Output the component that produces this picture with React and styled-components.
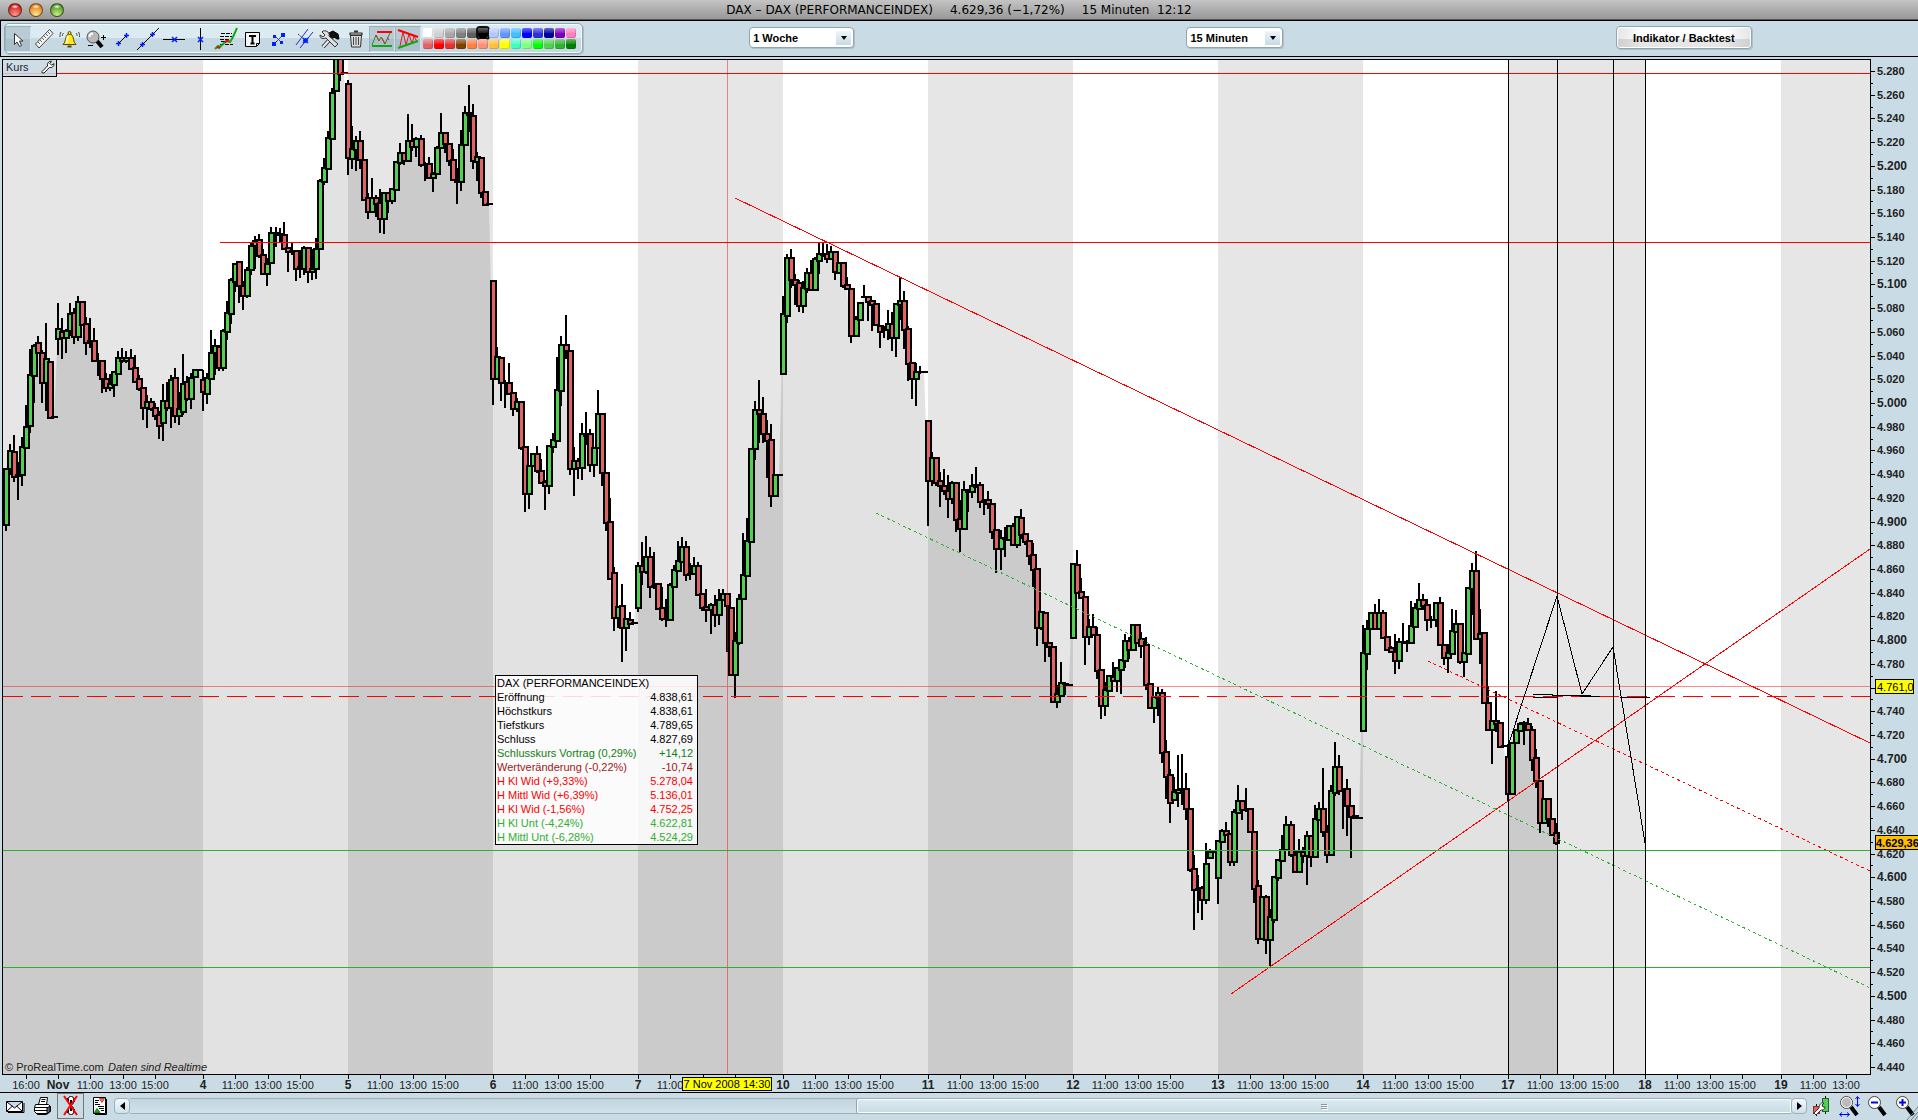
import React, { Component } from 'react';
import styled, { createGlobalStyle, css } from 'styled-components';

const GlobalStyle = createGlobalStyle`
  * {
    box-sizing: border-box;
  }

  body {
    margin: 0;
    background: #c9dbe4;
    font-family: 'Liberation Sans', Arial, sans-serif;
    font-size: 11px;
    color: #000;
  }
`;

const Window = styled.div`
  display: flex;
  flex-direction: column;
  overflow: hidden;
`;

const TitleBar = styled.header`
  display: flex;
  align-items: center;
  height: 21px;
  padding: 0 8px;
  background: linear-gradient(#c4c4c4, #969696);
  border-bottom: 1px solid #000;
  box-shadow: inset 0 -1px 0 #555;
`;

const Lights = styled.div`
  display: flex;
  flex: 1;
  gap: 7px;
`;

const Light = styled.button`
  width: 14px;
  height: 14px;
  padding: 0;
  border: 1px solid rgba(40, 20, 10, 0.6);
  border-radius: 50%;
  background: radial-gradient(ellipse 4px 2px at 50% 22%, rgba(255, 255, 255, 0.95), rgba(255, 255, 255, 0) 100%),
    radial-gradient(circle at 50% 90%, ${({ $glow }) => $glow}, ${({ $color }) => $color} 75%);
`;

const Title = styled.h1`
  display: flex;
  gap: 17px;
  margin: 0;
  font: 12px/18px 'DejaVu Sans', 'Open Sans', sans-serif;
  white-space: pre;
`;

const Toolbar = styled.div`
  display: flex;
  align-items: center;
  height: 36px;
  padding-left: 3px;
  border-left: 1px solid #000;
  border-bottom: 1px solid #000;
`;

const Tools = styled.div`
  display: flex;
  align-items: center;
  height: 31px;
  padding-right: 6px;
  border: 1px solid #8fa5b0;
  border-radius: 5px;
  background: linear-gradient(#dcebf2 50%, #c6d8e2 50%);
  box-shadow: inset 0 0 0 1px #f4fafc, 1px 1px 0 #aebfc8;
`;

const ToolButton = styled.button`
  display: flex;
  align-items: center;
  justify-content: center;
  width: 26px;
  height: 26px;
  padding: 0;
  border: none;
  background: none;

  ${({ $active }) =>
    $active &&
    css`
      background: linear-gradient(#b9cbd5 50%, #abc0cb 50%);
      box-shadow: inset 1px 1px 0 #9db1bc, inset -1px -1px 0 #d3e2ea;
    `}
`;

const Swatches = styled.div`
  display: grid;
  grid-template-columns: repeat(14, 10px);
  gap: 1px;
  padding-left: 2px;
`;

const Swatch = styled.button`
  height: 10px;
  padding: 0;
  border: none;
  border-radius: 2px;
  background: linear-gradient(rgba(255, 255, 255, 0.4), rgba(255, 255, 255, 0.1) 50%, rgba(255, 255, 255, 0) 50%)
    ${({ $color }) => $color};
  box-shadow: inset -1px -1px 0 rgba(0, 0, 0, 0.15);
  outline: ${({ $picked }) => ($picked ? '2px solid #111' : 'none')};
`;

const Controls = styled.div`
  display: flex;
  flex: 1;
  align-items: center;
  justify-content: space-around;
  padding-bottom: 2px;
`;

const SelectBox = styled.div`
  position: relative;
  width: ${({ $width }) => $width}px;
`;

const Select = styled.select`
  display: block;
  width: 100%;
  height: 21px;
  padding: 0 20px 0 3px;
  appearance: none;
  border: 1px solid #8fa5b0;
  border-radius: 4px;
  background: #fff;
  box-shadow: 1px 1px 0 #aebfc8;
  color: #000;
  font: bold 11px 'Liberation Sans', Arial, sans-serif;
`;

const Caret = styled.span`
  position: absolute;
  top: 4px;
  right: 3px;
  display: flex;
  align-items: center;
  justify-content: center;
  width: 15px;
  height: 14px;
  background: linear-gradient(#eef6fa, #c6dae5);
  pointer-events: none;

  &::after {
    content: '';
    border: 3px solid transparent;
    border-top: 4px solid #000;
    border-bottom: 0;
  }
`;

const BacktestButton = styled.button`
  width: 136px;
  height: 23px;
  padding: 0;
  border: 1px solid #8fa5b0;
  border-radius: 4px;
  background: linear-gradient(90deg, rgba(0, 0, 0, 0.1), transparent 20%, transparent 80%, rgba(0, 0, 0, 0.1)),
    linear-gradient(#fff 55%, #e6e6e6 55%);
  box-shadow: inset 0 0 0 1px #fff, 1px 1px 0 #aebfc8;
  font: bold 11px 'Liberation Sans', Arial, sans-serif;
`;

const ChartPane = styled.main`
  position: relative;
`;

const ChartSvg = styled.svg`
  display: block;
  width: 100%;
  height: auto;
  font-family: 'Liberation Sans', Arial, sans-serif;
  font-size: 11px;
`;

const PaneTab = styled.div`
  position: absolute;
  top: 2px;
  left: 2px;
  display: flex;
  align-items: center;
  justify-content: space-between;
  width: 55px;
  height: 18px;
  padding: 0 1px 2px 3px;
  border: 1px solid #000;
  background: rgba(201, 219, 228, 0.85);
  color: #223;
`;

const WrenchButton = styled.button`
  display: flex;
  padding: 0;
  border: none;
  background: none;
`;

const Quote = styled.table`
  position: absolute;
  top: 618px;
  left: 495px;
  width: 203px;
  border: 1px solid #000;
  border-collapse: separate;
  border-spacing: 0;
  background: rgba(255, 255, 255, 0.85);
  line-height: 14px;

  th,
  td {
    padding: 0 4px 0 1px;
    font-weight: normal;
    text-align: left;
  }

  td {
    text-align: right;
  }
`;

const QuoteRow = styled.tr`
  color: ${({ $color }) => $color || '#000'};
`;

const StatusBar = styled.footer`
  position: relative;
  display: flex;
  align-items: center;
  height: 27px;
  padding: 0 0 1px 1px;
  background: linear-gradient(#cddbe5, #c9dbe4 30%);
`;

const StatusButton = styled.button`
  display: flex;
  align-items: center;
  justify-content: center;
  width: ${({ $width }) => $width || 28}px;
  height: 26px;
  padding: 0;
  border: 1px solid ${({ $active }) => ($active ? '#777' : 'transparent')};
  background: none;
`;

const ScrollButton = styled.button`
  display: flex;
  align-items: center;
  justify-content: center;
  width: 16px;
  height: 16px;
  padding: 0;
  border: 1px solid #9ab0bb;
  border-radius: 4px;
  background: linear-gradient(#f2f9fc, #cfe0e9);
`;

const Track = styled.div`
  display: flex;
  justify-content: flex-end;
  flex: 1;
  height: 16px;
  border: 1px solid #9ab0bb;
  border-width: 1px 0;
  background: linear-gradient(#c3d5df, #d0e1ea);
`;

const Thumb = styled.div`
  display: flex;
  flex-direction: column;
  align-items: center;
  justify-content: center;
  gap: 1px;
  border: 1px solid #fff;
  border-radius: 2px;
  background: linear-gradient(#dceaf2, #c9dce6);
  box-shadow: -1px 0 0 #8fa5b0;

  span {
    width: 6px;
    height: 1px;
    background: #8298a3;
    box-shadow: 1px 1px 0 #fff;
  }
`;

const ResizeGrip = styled.svg`
  position: absolute;
  right: 0;
  bottom: 0;
`;

const UP = '#50d250';
const DOWN = '#e06464';
const RED = '#ff0000';
const GREEN = '#30b030';
const PANE = { left: 2, right: 1870, top: 59, bottom: 1074 };

const priceY = price => Math.round(71 + ((5280 - price) * 996) / 840);

// one entry per session, each candle is [open, high, low, close] in chart units
const SESSIONS = [
  {
    start: 6,
    candles: [
      [525, 468, 531, 469], [469, 444, 475, 451], [452, 435, 482, 477], [476, 462, 500, 475], [475, 437, 486, 447],
      [448, 405, 448, 427], [426, 349, 433, 375], [376, 344, 403, 346], [343, 336, 354, 353], [353, 350, 403, 383],
      [383, 323, 411, 359], [362, 361, 419, 418], [417, 417, 417, 417],
    ],
  },
  {
    start: 58,
    label: 'Nov',
    candles: [
      [339, 303, 355, 329], [332, 318, 359, 338], [338, 329, 353, 331], [331, 303, 336, 314], [313, 308, 344, 337],
      [337, 296, 341, 302], [302, 301, 326, 325], [324, 317, 355, 343], [341, 318, 348, 341], [341, 328, 362, 361],
      [361, 353, 376, 361], [361, 360, 393, 379], [379, 373, 392, 388], [388, 374, 391, 384], [385, 371, 397, 372],
      [374, 351, 375, 358], [358, 348, 363, 361], [361, 351, 363, 358], [358, 349, 369, 369], [368, 355, 383, 382],
      [379, 375, 391, 389], [388, 387, 420, 408], [408, 395, 428, 402], [402, 398, 411, 409], [408, 403, 420, 416],
      [415, 411, 439, 426], [423, 384, 441, 401], [401, 382, 411, 408], [408, 375, 428, 380], [378, 368, 423, 416],
      [416, 392, 425, 409], [412, 354, 415, 384], [382, 376, 401, 399], [399, 373, 409, 378], [377, 369, 378, 370],
      [370, 370, 370, 370],
    ],
  },
  {
    start: 203,
    label: '4',
    candles: [
      [380, 370, 411, 392], [394, 373, 404, 378], [379, 330, 380, 353], [353, 339, 375, 346], [347, 345, 371, 368],
      [368, 329, 371, 331], [332, 301, 340, 313], [314, 278, 324, 280], [282, 263, 292, 264], [262, 261, 303, 286],
      [286, 281, 310, 296], [296, 267, 298, 270], [270, 243, 275, 246], [246, 236, 269, 241], [240, 234, 258, 256],
      [255, 249, 275, 274], [274, 258, 286, 264], [263, 227, 264, 233], [233, 227, 247, 235], [235, 228, 243, 234],
      [235, 222, 250, 249], [248, 247, 272, 252], [251, 242, 255, 251], [251, 250, 281, 269], [269, 250, 278, 267],
      [269, 246, 275, 248], [248, 247, 283, 272], [272, 249, 280, 269], [269, 238, 279, 249], [249, 179, 250, 181],
      [182, 158, 185, 168], [169, 131, 170, 138], [139, 88, 140, 93], [91, 50, 92, 50], [50, 50, 81, 74],
      [73, 73, 73, 73],
    ],
  },
  {
    start: 348,
    label: '5',
    candles: [
      [84, 80, 175, 158], [159, 126, 169, 149], [150, 136, 171, 141], [141, 131, 169, 160], [160, 159, 201, 200],
      [198, 193, 219, 212], [212, 178, 213, 198], [198, 195, 217, 204], [203, 189, 233, 219], [219, 192, 234, 193],
      [193, 192, 213, 201], [201, 188, 204, 189], [190, 161, 191, 162], [163, 143, 165, 153], [153, 152, 165, 161],
      [161, 114, 162, 141], [141, 124, 151, 147], [147, 137, 157, 139], [139, 135, 167, 165], [165, 162, 181, 165],
      [164, 157, 179, 178], [178, 172, 192, 174], [174, 146, 175, 148], [148, 113, 149, 133], [133, 132, 153, 144],
      [144, 143, 166, 161], [160, 149, 181, 180], [180, 168, 204, 182], [182, 130, 191, 145], [145, 106, 146, 113],
      [113, 85, 132, 115], [116, 104, 169, 161], [162, 152, 181, 157], [158, 157, 198, 193], [192, 191, 206, 205],
      [204, 204, 204, 204],
    ],
  },
  {
    start: 493,
    label: '6',
    candles: [
      [281, 280, 405, 379], [379, 347, 380, 357], [358, 357, 401, 383], [383, 380, 408, 383], [383, 363, 395, 394],
      [393, 392, 416, 409], [409, 398, 412, 402], [402, 401, 450, 448], [447, 446, 512, 494], [494, 465, 509, 466],
      [466, 453, 467, 454], [454, 446, 473, 471], [471, 459, 484, 483], [482, 480, 510, 486], [486, 445, 494, 446],
      [447, 433, 453, 440], [441, 357, 442, 390], [391, 336, 406, 345], [345, 315, 359, 351], [351, 350, 475, 469],
      [469, 447, 496, 461], [461, 458, 479, 468], [468, 423, 480, 434], [434, 412, 445, 436], [434, 429, 472, 465],
      [465, 447, 477, 448], [448, 390, 449, 414], [414, 413, 486, 473], [473, 472, 531, 523], [522, 498, 580, 579],
      [573, 567, 631, 618], [618, 606, 628, 607], [606, 584, 662, 628], [628, 618, 651, 619], [620, 612, 625, 624],
      [623, 623, 623, 623],
    ],
  },
  {
    start: 638,
    label: '7',
    candles: [
      [608, 562, 612, 566], [566, 542, 585, 572], [572, 536, 574, 557], [557, 547, 598, 587], [586, 552, 589, 586],
      [584, 583, 610, 609], [608, 587, 621, 619], [619, 599, 627, 619], [620, 583, 621, 585], [587, 565, 588, 570],
      [571, 541, 572, 561], [562, 537, 563, 547], [547, 541, 581, 575], [574, 563, 580, 574], [574, 557, 575, 566],
      [566, 562, 596, 595], [594, 593, 611, 608], [607, 589, 622, 610], [610, 603, 634, 605], [605, 595, 627, 615],
      [615, 589, 625, 600], [600, 589, 601, 594], [594, 593, 652, 606], [608, 607, 676, 675], [675, 632, 698, 641],
      [643, 594, 645, 599], [599, 533, 600, 575], [576, 518, 577, 541], [542, 448, 543, 449], [449, 401, 460, 410],
      [410, 380, 443, 414], [414, 397, 443, 434], [434, 420, 478, 441], [440, 424, 507, 496], [496, 474, 497, 475],
      [475, 475, 475, 475],
    ],
  },
  {
    start: 783,
    label: '10',
    candles: [
      [374, 296, 375, 314], [316, 254, 323, 258], [258, 249, 288, 280], [280, 274, 305, 285], [283, 280, 312, 306],
      [306, 281, 313, 288], [289, 268, 293, 273], [273, 260, 291, 290], [290, 257, 291, 259], [261, 243, 274, 254],
      [254, 243, 257, 255], [254, 244, 263, 259], [259, 246, 260, 252], [252, 251, 280, 272], [273, 262, 274, 263],
      [263, 262, 288, 286], [285, 277, 290, 289], [289, 288, 343, 336], [336, 316, 337, 319], [320, 302, 321, 303],
      [297, 285, 298, 297], [297, 296, 321, 302], [301, 300, 331, 305], [304, 303, 326, 325], [326, 325, 348, 332],
      [330, 326, 338, 328], [330, 310, 340, 324], [324, 312, 351, 338], [338, 303, 357, 304], [305, 277, 320, 301],
      [301, 291, 349, 330], [329, 326, 381, 364], [363, 362, 399, 379], [379, 363, 406, 372], [372, 366, 374, 372],
      [372, 372, 372, 372],
    ],
  },
  {
    start: 928,
    label: '11',
    candles: [
      [421, 420, 526, 481], [481, 452, 486, 458], [458, 457, 486, 483], [481, 472, 507, 486], [486, 469, 495, 491],
      [491, 475, 518, 499], [499, 481, 504, 483], [483, 482, 532, 520], [519, 500, 552, 529], [529, 481, 530, 490],
      [492, 489, 512, 492], [492, 474, 498, 486], [487, 467, 488, 485], [485, 482, 508, 502], [501, 499, 515, 501],
      [500, 491, 509, 504], [504, 503, 539, 532], [530, 529, 573, 549], [549, 530, 570, 538], [539, 527, 557, 539],
      [540, 525, 541, 526], [526, 523, 546, 545], [545, 516, 548, 517], [518, 509, 539, 535], [534, 533, 545, 542],
      [541, 540, 565, 556], [555, 543, 587, 570], [569, 568, 646, 628], [628, 611, 630, 612], [613, 612, 662, 643],
      [643, 642, 657, 647], [647, 646, 703, 702], [702, 685, 708, 694], [696, 662, 697, 683], [684, 682, 695, 684],
      [685, 685, 685, 685],
    ],
  },
  {
    start: 1073,
    label: '12',
    candles: [
      [638, 563, 639, 564], [565, 550, 594, 593], [592, 578, 599, 598], [597, 596, 665, 637], [637, 619, 645, 627],
      [627, 614, 636, 635], [635, 627, 679, 671], [670, 669, 719, 706], [706, 682, 716, 690], [691, 675, 692, 676],
      [677, 662, 682, 681], [681, 667, 692, 668], [670, 659, 694, 660], [661, 634, 668, 641], [641, 637, 659, 650],
      [650, 624, 651, 625], [625, 624, 644, 643], [639, 632, 658, 646], [645, 637, 690, 685], [684, 683, 709, 708],
      [708, 696, 723, 697], [698, 687, 716, 693], [693, 689, 763, 753], [752, 740, 799, 777], [775, 769, 823, 803],
      [800, 777, 801, 792], [793, 755, 807, 790], [790, 754, 805, 789], [789, 773, 820, 809], [809, 808, 872, 870],
      [869, 855, 930, 890], [889, 875, 913, 889], [888, 886, 920, 900], [900, 843, 904, 864], [858, 849, 859, 852],
      [852, 852, 852, 852],
    ],
  },
  {
    start: 1218,
    label: '13',
    candles: [
      [878, 840, 904, 841], [842, 829, 843, 831], [831, 822, 836, 835], [834, 833, 866, 862], [862, 809, 866, 812],
      [813, 785, 814, 801], [801, 800, 820, 810], [810, 788, 812, 810], [809, 808, 833, 832], [832, 831, 903, 889],
      [886, 880, 944, 939], [939, 896, 940, 897], [897, 895, 954, 940], [940, 909, 966, 917], [920, 876, 923, 877],
      [878, 859, 881, 860], [861, 835, 862, 850], [850, 816, 851, 825], [825, 821, 857, 855], [855, 850, 873, 872],
      [872, 839, 873, 852], [852, 847, 863, 856], [856, 831, 885, 836], [836, 835, 867, 857], [857, 805, 858, 819],
      [820, 802, 821, 809], [809, 768, 837, 832], [832, 825, 863, 855], [855, 785, 856, 791], [793, 742, 796, 767],
      [767, 755, 795, 791], [791, 788, 829, 791], [789, 779, 836, 806], [806, 805, 858, 817], [816, 815, 819, 818],
      [818, 818, 818, 818],
    ],
  },
  {
    start: 1363,
    label: '14',
    candles: [
      [731, 625, 732, 653], [654, 620, 670, 629], [629, 612, 630, 613], [613, 604, 630, 629], [629, 599, 630, 613],
      [613, 610, 639, 638], [637, 636, 651, 650], [648, 646, 653, 652], [652, 634, 674, 661], [661, 638, 669, 642],
      [642, 623, 644, 642], [643, 640, 652, 643], [643, 601, 644, 626], [627, 603, 628, 608], [609, 583, 610, 600],
      [600, 594, 610, 606], [605, 599, 631, 620], [620, 616, 628, 620], [620, 602, 627, 603], [603, 597, 646, 645],
      [645, 644, 665, 658], [658, 644, 673, 653], [654, 609, 655, 631], [632, 610, 633, 624], [624, 623, 664, 662],
      [662, 652, 677, 653], [654, 587, 655, 588], [589, 563, 615, 571], [571, 551, 640, 639], [639, 609, 664, 634],
      [633, 632, 704, 703], [703, 686, 731, 730], [730, 720, 764, 721], [721, 691, 732, 724], [723, 722, 748, 747],
      [746, 746, 746, 746],
    ],
  },
  {
    start: 1508,
    label: '17',
    candles: [
      [757, 744, 801, 794], [794, 742, 795, 743], [743, 729, 744, 730], [731, 722, 732, 724], [724, 721, 745, 723],
      [724, 718, 731, 730], [730, 726, 771, 760], [758, 749, 788, 781], [781, 780, 833, 823], [823, 798, 824, 799],
      [799, 798, 827, 819], [819, 818, 836, 835], [833, 823, 845, 843],
    ],
  },
  { start: 1645, label: '18', candles: [] },
  { start: 1781, label: '19', candles: [] },
];

const BANDS = [
  [3, 203],
  [348, 493],
  [638, 783],
  [928, 1073],
  [1218, 1363],
  [1508, 1645],
  [1781, 1870],
];

const CANDLES = SESSIONS.reduce(
  (all, { start, candles }) =>
    all.concat(candles.map(([open, high, low, close], i) => ({ x: start + Math.round((i * 145) / 36), open, high, low, close }))),
  [],
);

const AREA = `M3 ${PANE.bottom}L3 500${CANDLES.map(({ x, close }) => `L${x} ${close}`).join('')}L1558 843V${PANE.bottom}Z`;

const CURSOR = { price: '4.761,0', time: '7 Nov 2008 14:30', from: 683, to: 771 };
const PRICES = Array.from({ length: 43 }, (_, i) => 5280 - i * 20);
const formatPrice = price => `${Math.floor(price / 1000)}.${String(price % 1000).padStart(3, '0')}`;

const TIME_LABELS = [{ x: 26, text: '16:00' }].concat(
  SESSIONS.filter(({ label }) => label).reduce(
    (all, { start, label }) =>
      all.concat(
        { x: start, text: label, day: true },
        ['11:00', '13:00', '15:00'].map((text, i) => ({ x: start + [32, 65, 97][i], text })),
      ),
    [],
  ),
).filter(({ x }) => x < 1870);

const QUOTE = [
  ['Eröffnung', '4.838,61'],
  ['Höchstkurs', '4.838,61'],
  ['Tiefstkurs', '4.789,65'],
  ['Schluss', '4.827,69'],
  ['Schlusskurs Vortrag (0,29%)', '+14,12', '#108010'],
  ['Wertveränderung (-0,22%)', '-10,74', '#a01818'],
  ['H Kl Wid (+9,33%)', '5.278,04', RED],
  ['H Mittl Wid (+6,39%)', '5.136,01', RED],
  ['H Kl Wid (-1,56%)', '4.752,25', RED],
  ['H Kl Unt (-4,24%)', '4.622,81', GREEN],
  ['H Mittl Unt (-6,28%)', '4.524,29', GREEN],
];

const COLORS = [
  '#ffffff', '#d0d0d0', '#a8a8a8', '#808080', '#606060', '#000000', '#b4c8ff', '#6496ff', '#40c0ff', '#0000ff',
  '#3030e0', '#0000a0', '#8000c0', '#ff80c0', '#e06464', '#ff0000', '#e83232', '#804000', '#ff8040', '#ff9078',
  '#ffc040', '#ffff00', '#40ffc0', '#80ff80', '#00ff00', '#50d250', '#30b430', '#008000',
];

const Icon = ({ children, size = 24 }) => (
  <svg width={size} height={size} viewBox={`0 0 ${size} ${size}`} fill="none" stroke="#000" aria-hidden="true">
    {children}
  </svg>
);

const Plus = ({ x, y }) => <path d={`M${x - 2} ${y + 0.5}h5M${x + 0.5} ${y - 2}v5`} stroke="#0020ff" strokeWidth="1.5" />;

const Cross = ({ x, y }) => <path d={`M${x - 2} ${y - 2}l5 5m0 -5l-5 5`} stroke="#0020ff" strokeWidth="1.5" />;

const Wrench = () => (
  <svg width="14" height="14" viewBox="0 0 14 14" aria-hidden="true">
    <path
      d="M1 11.5L6.5 6C6 3.5 7.5 1 10.5 1.2L8.8 3.4L10.6 5.2L13 3.6C13.2 6.5 11 8 8.3 7.6L3 13L1 12.8Z"
      fill="#fff"
      stroke="#222"
    />
  </svg>
);

const Lens = ({ sign }) => (
  <>
    <path d="M14 13L20 21" strokeWidth="4" />
    <circle cx="9.5" cy="8.5" r="6" fill="#fff" stroke="#444" />
    {sign === 'both' && <circle cx="9.5" cy="8.5" r="5" fill="#bbb" stroke="#eee" />}
    {(sign === 'minus' || sign === 'plus') && <path d="M6 8.500h7" stroke="#0000ff" strokeWidth="2" />}
    {sign === 'plus' && <path d="M9.500 5v7" stroke="#0000ff" strokeWidth="2" />}
  </>
);

const TOOLS = [
  {
    name: 'Zeiger',
    active: true,
    icon: <path d="M8.500 6.500v11l2.500-2.500 2.500 4.500 2-1-2-4.500h3.500z" fill="#fff" stroke="#333" />,
  },
  {
    name: 'Lineal',
    icon: (
      <>
        <path d="M3.500 17L17.500 2.500l3.500 4L7 21z" fill="#f4f4f4" stroke="#444" />
        <path d="M6 15l2 2M8 13l2 2M10 11l2 2M12 9l2 2M14 7l2 2M16 5l2 2" stroke="#666" />
      </>
    ),
  },
  {
    name: 'Alarm',
    icon: (
      <>
        <path d="M5 17.500c3.500-2.500 1.500-8 5-10.500h3c3.500 2.500 1.500 8 5 10.500z" fill="#ffe818" stroke="#5a4a00" />
        <circle cx="11.500" cy="6" r="1.500" fill="#ffe818" stroke="#5a4a00" />
        <path d="M10 9c-1 3-0.500 4-1.500 7" stroke="#fffac0" strokeWidth="2" />
        <path d="M9.500 19.500h4" stroke="#5a4a00" strokeWidth="2" />
        <path d="M5.500 6c-1 1-1 2-1 3M3 5c-1 1.500-1 3-1 5M18 6c1 1 1 2 1 3M20.500 5c1 1.500 1 3 1 5" stroke="#444" />
      </>
    ),
  },
  {
    name: 'Zoom',
    icon: (
      <>
        <path d="M13 14L18 20" strokeWidth="4" />
        <circle cx="9" cy="10" r="6" fill="#b8b8b8" stroke="#555" />
        <path d="M5.500 10c0-2 1.500-3.500 3.500-3.500" stroke="#fff" strokeWidth="2" />
        <path d="M17 10.500h5M19.500 8v5M4 18.500h5" />
      </>
    ),
  },
  {
    name: 'Segment',
    icon: (
      <>
        <path d="M8 17L17 8" />
        <Plus x={8} y={16} />
        <Plus x={16} y={8} />
      </>
    ),
  },
  {
    name: 'Gerade',
    icon: (
      <>
        <path d="M1 23L23 1" />
        <Plus x={6} y={17} />
        <Plus x={16} y={7} />
      </>
    ),
  },
  {
    name: 'Horizontale',
    icon: (
      <>
        <path d="M1 12.500h22" />
        <Cross x={12} y={12} />
      </>
    ),
  },
  {
    name: 'Vertikale',
    icon: (
      <>
        <path d="M12.500 1v22" />
        <Cross x={12} y={12} />
      </>
    ),
  },
  {
    name: 'Fibonacci',
    icon: (
      <>
        <path d="M7 6.500h11M6 9.500h12M6 12.500h10M7 14.500h10M6 17.500h13" strokeDasharray="4 1" />
        <path d="M1 22l3-3 2 1 4-4 3-2 3 1 3-5 4-9" stroke="#10a810" strokeWidth="2" />
        <path d="M3 20l3 1M11 15l4-2" stroke="#ff0000" strokeWidth="2" />
      </>
    ),
  },
  {
    name: 'Text',
    icon: (
      <>
        <path d="M5.500 5.500h14v11l-3 3h-11z" fill="#f4f4f4" />
        <path d="M9 9h7M12.500 9v8M10.500 16.500h4" strokeWidth="2" />
        <path d="M16.500 19v-2.500h3" />
      </>
    ),
  },
  {
    name: 'Parallele',
    icon: (
      <>
        <path d="M8 17L17 8" strokeDasharray="2 1" />
        <path d="M9 9l7 7" stroke="#3040c0" />
        <g fill="#0020ff" stroke="none">
          <rect x="6" y="15" width="4" height="4" />
          <rect x="15" y="6" width="4" height="4" />
          <rect x="7" y="8" width="3" height="3" />
          <rect x="14" y="14" width="3" height="3" />
        </g>
      </>
    ),
  },
  {
    name: 'Kanal',
    icon: (
      <>
        <path d="M4 18L16 2M8 21L21 5" stroke="#2030c0" />
        <path d="M6 7l8 7" stroke="#334" strokeDasharray="2 1" />
        <Plus x={13} y={13} />
        <Cross x={13} y={13} />
      </>
    ),
  },
  {
    name: 'Werkzeuge',
    icon: (
      <>
        <path d="M5 20L15 9" stroke="#333" strokeWidth="4" />
        <path d="M5 20L15 9" stroke="#eee" strokeWidth="2" />
        <path d="M11 6l4-2 5 3 1 5h-2l-3-2-3 1z" fill="#111" />
        <path d="M4 5l3 3-2 2-3-2c0 4 3 4 6 3l9 9 3-3-9-8c1-3-2-6-6-5z" fill="#ddd" stroke="#333" />
      </>
    ),
  },
  {
    name: 'Löschen',
    icon: (
      <>
        <path d="M6.500 8.500l1 11.500h9l1-11.500z" fill="#ddd" stroke="#333" />
        <path d="M5.500 7h13" stroke="#333" strokeWidth="3" />
        <path d="M7 7h10" stroke="#ccc" />
        <path d="M10 4.500h4" stroke="#333" strokeWidth="2" />
        <path d="M9.500 10v8M12 10v8M14.500 10v8" stroke="#444" />
      </>
    ),
  },
  {
    name: 'Unterstützungen',
    active: true,
    icon: (
      <>
        <path d="M2 18l4-10 3 6 2-4 4 7 5-11" stroke="#209020" />
        <path d="M6 8l3 6M12 11l3 6M17 10l2 3" stroke="#e02020" />
        <path d="M7 5h15" stroke="#ff0000" strokeWidth="2" />
        <path d="M2 19h20" stroke="#10a810" strokeWidth="2" />
      </>
    ),
  },
  {
    name: 'Dreiecke',
    active: true,
    icon: (
      <>
        <path d="M4 19l3-14 3 13 3-11 3 10 2-8 3 6" stroke="#e02020" />
        <path d="M2 3l20 7" stroke="#ff0000" strokeWidth="2" />
        <path d="M2 21l20-7" stroke="#10a810" strokeWidth="2" />
      </>
    ),
  },
];

const ToolPalette = () => (
  <Tools>
    {TOOLS.map(({ name, active, icon }) => (
      <ToolButton key={name} type="button" aria-label={name} $active={active}>
        <Icon>{icon}</Icon>
      </ToolButton>
    ))}
    <Swatches>
      {COLORS.map(color => (
        <Swatch key={color} type="button" aria-label={color} $color={color} $picked={color === '#000000'} />
      ))}
    </Swatches>
  </Tools>
);

const Dropdown = ({ id, label, width, options, value, onChange }) => (
  <SelectBox $width={width}>
    <Select id={id} name={id} aria-label={label} value={value} onChange={onChange}>
      {options.map(option => (
        <option key={option}>{option}</option>
      ))}
    </Select>
    <Caret />
  </SelectBox>
);

const Candle = ({ x, open, high, low, close }) => {
  const top = Math.min(open, close);
  const bottom = Math.max(open, close);
  return (
    <g>
      {low > high && <rect x={x - 1} y={high} width="2" height={low - high} fill="#000" />}
      <rect x={x - 3} y={top - 1} width="7" height={bottom - top + 2} fill="#000" />
      {bottom - top > 2 && (
        <rect x={x - 1} y={top + 1} width="3" height={bottom - top - 2} fill={close < open ? UP : DOWN} />
      )}
    </g>
  );
};

const Axes = () => (
  <g>
    <rect x="0" y="57" width="2" height="1018" fill="#c9dbe4" />
    <path d="M2.500 59.500H1870.500V1074.500H2.500ZM0 1092.500H1918" fill="none" stroke="#000" shapeRendering="crispEdges" />
    {PRICES.map(price => (
      <g key={price}>
        <rect x="1871" y={priceY(price)} width="4" height="1" />
        {price > 4440 && <rect x="1871" y={priceY(price - 10)} width="2" height="1" />}
        {price !== 4760 && (
          <text x="1877" y={priceY(price) + 4} fontWeight="bold" fontSize={price % 100 ? 11 : 12} fill="#222">
            {formatPrice(price)}
          </text>
        )}
      </g>
    ))}
    {TIME_LABELS.map(({ x, text, day }) => (
      <g key={x}>
        <rect x={x} y="1075" width="1" height="4" />
        {(x < CURSOR.from || x > CURSOR.to) && (
          <text x={x} y="1089" textAnchor="middle" fontSize={day ? 12 : 11} fontWeight={day ? 'bold' : 'normal'} fill="#222">
            {text}
          </text>
        )}
      </g>
    ))}
    <g stroke="#000">
      <rect x="1875.5" y="679.5" width="38" height="14" fill="#ffff00" />
      <rect x="1875.5" y="835.5" width="44" height="14" fill="#ffc000" />
      <rect x="682.5" y="1077.5" width="89" height="13" fill="#ffff00" />
    </g>
    <text x="1877" y="691">
      {CURSOR.price}
    </text>
    <text x="1876" y="847" fontWeight="bold">
      4.629,36
    </text>
    <text x="727" y="1088" textAnchor="middle">
      {CURSOR.time}
    </text>
  </g>
);

const Chart = () => (
  <ChartSvg viewBox="0 57 1918 1036" role="img" aria-label="DAX 15 Minuten">
    <rect x="2" y="59" width="1869" height="1016" fill="#fff" />
    {BANDS.map(([from, to]) => (
      <rect key={from} x={from} y="59" width={to - from} height="1016" fill="#e6e6e6" />
    ))}
    <path d={AREA} fill="#000" fillOpacity="0.115" />
    <g shapeRendering="crispEdges">
      {CANDLES.map(candle => (
        <Candle key={candle.x} {...candle} />
      ))}
      <rect x="2" y="57" width="1869" height="2" fill="#c9dbe4" />
    </g>
    <g fill="none" stroke={RED} shapeRendering="crispEdges">
      <path d="M3 73.500H1870M220 242.500H1870" />
      <path d="M3 696.500H1870" strokeDasharray="20 8" />
      <path d="M735 198L1870 743M1231 994L1870 549" />
      <path d="M1428 661L1870 871" strokeDasharray="3 3" />
      <path d="M3 686.500H1870M727.500 59V1074" strokeOpacity="0.45" />
    </g>
    <g fill="none" stroke={GREEN} shapeRendering="crispEdges">
      <path d="M3 850.500H1870M3 967.500H1870" />
      <path d="M876 513L1870 988" strokeDasharray="3 3" />
    </g>
    <g fill="none" stroke="#000" shapeRendering="crispEdges">
      <path d="M1508.500 59V1074M1557.500 59V1074M1613.500 59V1074M1645.500 59V1074" />
      <path d="M1509 743L1557 596L1582 694L1613 647L1645 843" />
      <path d="M1533 694.500H1553M1533 697.500H1557M1552 695.500H1591M1580 696.500H1600M1620 697.500H1650" />
    </g>
    <text x="5" y="1071" fill="#222">
      © ProRealTime.com
    </text>
    <text x="108" y="1071" fill="#222" fontStyle="italic">
      Daten sind Realtime
    </text>
    <Axes />
  </ChartSvg>
);

const QuoteBox = () => (
  <Quote>
    <thead>
      <tr>
        <th colSpan="2">DAX (PERFORMANCEINDEX)</th>
      </tr>
    </thead>
    <tbody>
      {QUOTE.map(([label, value, color]) => (
        <QuoteRow key={label} $color={color}>
          <th scope="row">{label}</th>
          <td>{value}</td>
        </QuoteRow>
      ))}
    </tbody>
  </Quote>
);

const Footer = () => (
  <StatusBar>
    <StatusButton type="button" aria-label="E-Mail">
      <Icon size={20}>
        <path d="M1.500 5.500h16v10h-16zM2 6l7.500 6L17 6M2 15l5.500-5M17 15l-5.500-5" fill="#fff" />
        <path d="M3 16.500h16V7" />
      </Icon>
    </StatusButton>
    <StatusButton type="button" aria-label="Drucken">
      <Icon size={20}>
        <path d="M5.500 8.500l2-7h7l-1 7z" fill="#fff" />
        <path d="M8.500 3.500h4M8 5.500h4" />
        <path d="M2.500 8.500l-1 3v4l3 3h9l4-3v-5l-2-2z" fill="#fff" />
        <path d="M2 11.500h14M2 14.500h15M4 17.500h10" />
        <path d="M14 12l3-2v5l-3 3z" fill="#666" />
      </Icon>
    </StatusButton>
    <StatusButton type="button" aria-label="Verknüpfung" $active $width={27}>
      <Icon>
        <rect x="9.500" y="2.500" width="5" height="8" rx="2" fill="#fff" />
        <rect x="9.500" y="12.500" width="5" height="8" rx="2" fill="#fff" />
        <path d="M12 6v11" strokeWidth="2" />
        <path d="M8.500 4v4M8.500 15v4M15.500 4v4M15.500 15v4" />
        <path d="M5 2l13 19M18 2L5 21" stroke="#ff0000" strokeWidth="2" />
      </Icon>
    </StatusButton>
    <StatusButton type="button" aria-label="Orderbuch" $width={30}>
      <Icon size={20}>
        <path d="M4.500 1.500h12v16h-12z" fill="#fff" />
        <path d="M17.500 3v15.500H6" />
        <path d="M6 4.500h4M6 6.500h3M6 8.500h5M9 10.500h6M10 12.500h5M12 14.500h3" />
        <path d="M10.500 2.500h5l-2.500 4z" fill="#ff7070" stroke="#c04040" />
        <path d="M5.500 16.500l2.500-4 3 4z" fill="#10b010" stroke="#108010" />
      </Icon>
    </StatusButton>
    <ScrollButton type="button" aria-label="Zurück">
      <svg width="5" height="8" viewBox="0 0 5 8" aria-hidden="true">
        <path d="M5 0v8L0 4z" />
      </svg>
    </ScrollButton>
    <Track>
      <Thumb role="scrollbar" aria-controls="chart" aria-valuenow={100} style={{ width: `${(933 / 1660) * 100}%` }}>
        <span />
        <span />
        <span />
      </Thumb>
    </Track>
    <ScrollButton type="button" aria-label="Vor">
      <svg width="5" height="8" viewBox="0 0 5 8" aria-hidden="true">
        <path d="M0 0v8l5-4z" />
      </svg>
    </ScrollButton>
    <StatusButton type="button" aria-label="Kerzenstil">
      <Icon size={20}>
        <path d="M14.500 0v18M5.500 8v12" />
        <rect x="11.500" y="2.500" width="6" height="13" fill={UP} stroke="#286028" />
        <rect x="2.500" y="10.500" width="6" height="7" fill={DOWN} stroke="#803030" />
        <path d="M3 17l5-5c0-3 2-6 5-5l-2 2 1 2h2c0 3-3 3-4 3l-5 5z" fill="#fff" stroke="#333" />
      </Icon>
    </StatusButton>
    <StatusButton type="button" aria-label="Alles zeigen">
      <Icon>
        <Lens sign="both" />
        <path d="M20.500 3v9M18.500 5l2-2.500 2 2.500M18.500 10l2 2.500 2-2.500M3 20.500h9M5 18.500L2.500 20.500 5 22.500M10 18.500l2.500 2-2.500 2" stroke="#0000ff" />
      </Icon>
    </StatusButton>
    <StatusButton type="button" aria-label="Verkleinern">
      <Icon>
        <Lens sign="minus" />
      </Icon>
    </StatusButton>
    <StatusButton type="button" aria-label="Vergrößern" $width={27}>
      <Icon>
        <Lens sign="plus" />
      </Icon>
    </StatusButton>
    <ResizeGrip width="12" height="14" viewBox="0 0 12 14" fill="none" stroke="#6d7c84" aria-hidden="true">
      <path d="M1 14L12 1M5 14L12 6M9 14L12 10" />
    </ResizeGrip>
  </StatusBar>
);

export default class App extends Component {
  constructor(props) {
    super(props);
    this.state = {
      range: '1 Woche',
      interval: '15 Minuten',
    };
  }

  handleChange = e => this.setState({ [e.target.name]: e.target.value });

  render() {
    const { range, interval } = this.state;
    return (
      <Window>
        <GlobalStyle />
        <TitleBar>
          <Lights>
            <Light type="button" aria-label="Schließen" $color="#d02020" $glow="#ff9a90" />
            <Light type="button" aria-label="Minimieren" $color="#e08020" $glow="#ffe890" />
            <Light type="button" aria-label="Maximieren" $color="#509830" $glow="#c8f080" />
          </Lights>
          <Title>
            <span>DAX – DAX (PERFORMANCEINDEX)</span>
            <span>4.629,36 (−1,72%)</span>
            <span>15 Minuten{'  '}12:12</span>
          </Title>
          <Lights as="span" />
        </TitleBar>
        <Toolbar>
          <ToolPalette />
          <Controls>
            <Dropdown
              id="range"
              label="Zeitraum"
              width={105}
              options={['1 Tag', '1 Woche', '1 Monat', '1 Jahr']}
              value={range}
              onChange={this.handleChange}
            />
            <Dropdown
              id="interval"
              label="Intervall"
              width={97}
              options={['5 Minuten', '15 Minuten', '1 Stunde']}
              value={interval}
              onChange={this.handleChange}
            />
            <BacktestButton type="button">Indikator / Backtest</BacktestButton>
          </Controls>
        </Toolbar>
        <ChartPane id="chart">
          <Chart />
          <PaneTab>
            Kurs
            <WrenchButton type="button" aria-label="Einstellungen">
              <Wrench />
            </WrenchButton>
          </PaneTab>
          <QuoteBox />
        </ChartPane>
        <Footer />
      </Window>
    );
  }
}
